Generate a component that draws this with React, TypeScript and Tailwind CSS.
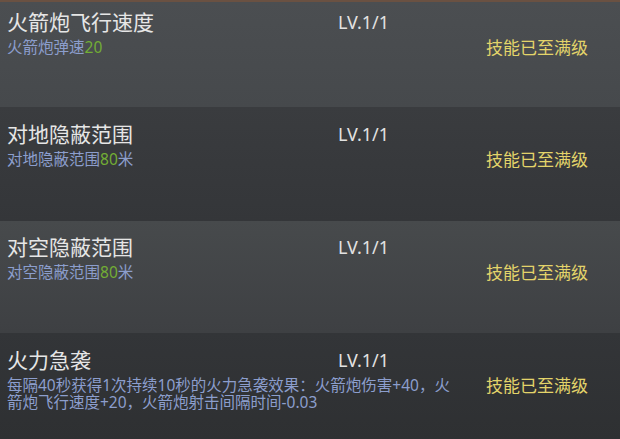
import React from 'react';

// One row in the skill list
interface SkillRow {
  title: string;
  level: string;
  desc: React.ReactNode;
  bg: string;
  height: string;
  pad: string;
}

const Green = ({ children }: { children: React.ReactNode }) => (
  <span className="text-[#72ad35]">{children}</span>
);

const ROWS: SkillRow[] = [
  {
    title: '火箭炮飞行速度',
    level: 'LV.1/1',
    desc: (
      <>
        火箭炮弹速<Green>20</Green>
      </>
    ),
    bg: 'bg-gradient-to-b from-[#4b4e51] to-[#46494c] border-t-2 border-[#6a5142]',
    height: 'h-[107px]',
    pad: 'pt-[7px]',
  },
  {
    title: '对地隐蔽范围',
    level: 'LV.1/1',
    desc: (
      <>
        对地隐蔽范围<Green>80</Green>米
      </>
    ),
    bg: 'bg-gradient-to-b from-[#3a3c3f] to-[#343639]',
    height: 'h-[114px]',
    pad: 'pt-[14px]',
  },
  {
    title: '对空隐蔽范围',
    level: 'LV.1/1',
    desc: (
      <>
        对空隐蔽范围<Green>80</Green>米
      </>
    ),
    bg: 'bg-gradient-to-b from-[#474a4c] to-[#3e4043]',
    height: 'h-[112px]',
    pad: 'pt-[13px]',
  },
  {
    title: '火力急袭',
    level: 'LV.1/1',
    desc: '每隔40秒获得1次持续10秒的火力急袭效果：火箭炮伤害+40，火箭炮飞行速度+20，火箭炮射击间隔时间-0.03',
    bg: 'bg-gradient-to-b from-[#333538] to-[#2e3032]',
    height: 'flex-1',
    pad: 'pt-[14px]',
  },
];

const App: React.FC = () => {
  return (
    <div
      className="w-[620px] h-[439px] flex flex-col overflow-hidden bg-[#2e3032]"
      style={{ fontFamily: '"Noto Sans", "Noto Sans CJK SC", sans-serif' }}
    >
      {ROWS.map((row, i) => (
        <div key={i} className={`${row.height} ${row.bg} ${row.pad} pl-[7px]`}>
          <div className="grid grid-cols-[331px_148px_1fr]">
            <div className="text-[21px] leading-[26px] text-[#e6e6e6]">{row.title}</div>
            <div className="text-[18px] leading-[26px] text-[#e2e2e2]">{row.level}</div>
            <div />
            <div className="col-span-2 mt-[4px] max-w-[447px] text-[15.5px] leading-[17px] text-[#8c9ecd]">
              {row.desc}
            </div>
            <div className="mt-[4px] text-[17px] leading-[17px] text-[#e3d46a]">技能已至满级</div>
          </div>
        </div>
      ))}
    </div>
  );
};

export default App;
